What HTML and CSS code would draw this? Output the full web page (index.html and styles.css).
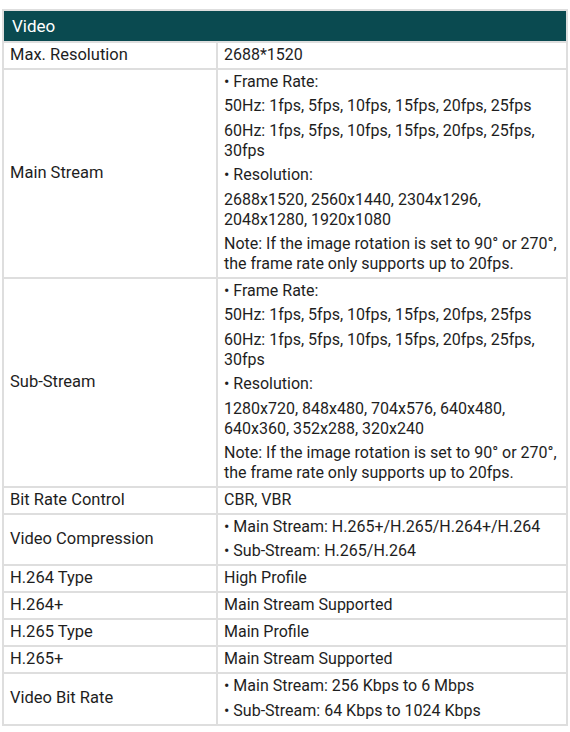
FILE: index.html
```html
<!DOCTYPE html>
<html>
<head>
<meta charset="utf-8">
<link rel="stylesheet" href="styles.css">
</head>
<body>
<table class="spec">
  <colgroup><col class="c1"><col class="c2"></colgroup>
  <thead>
    <tr><th colspan="2" class="head">Video</th></tr>
  </thead>
  <tbody>
    <tr><td class="lbl">Max. Resolution</td><td class="val"><p>2688*1520</p></td></tr>
    <tr><td class="lbl">Main Stream</td><td class="val">
      <p>• Frame Rate:</p>
      <p>50Hz: 1fps, 5fps, 10fps, 15fps, 20fps, 25fps</p>
      <p>60Hz: 1fps, 5fps, 10fps, 15fps, 20fps, 25fps, 30fps</p>
      <p>• Resolution:</p>
      <p>2688x1520, 2560x1440, 2304x1296, 2048x1280, 1920x1080</p>
      <p>Note: If the image rotation is set to 90° or 270°, the frame rate only supports up to 20fps.</p>
    </td></tr>
    <tr><td class="lbl">Sub-Stream</td><td class="val">
      <p>• Frame Rate:</p>
      <p>50Hz: 1fps, 5fps, 10fps, 15fps, 20fps, 25fps</p>
      <p>60Hz: 1fps, 5fps, 10fps, 15fps, 20fps, 25fps, 30fps</p>
      <p>• Resolution:</p>
      <p>1280x720, 848x480, 704x576, 640x480, 640x360, 352x288, 320x240</p>
      <p>Note: If the image rotation is set to 90° or 270°, the frame rate only supports up to 20fps.</p>
    </td></tr>
    <tr><td class="lbl">Bit Rate Control</td><td class="val"><p>CBR, VBR</p></td></tr>
    <tr><td class="lbl">Video Compression</td><td class="val">
      <p>• Main Stream: H.265+/H.265/H.264+/H.264</p>
      <p>• Sub-Stream: H.265/H.264</p>
    </td></tr>
    <tr><td class="lbl">H.264 Type</td><td class="val"><p>High Profile</p></td></tr>
    <tr><td class="lbl">H.264+</td><td class="val"><p>Main Stream Supported</p></td></tr>
    <tr><td class="lbl">H.265 Type</td><td class="val"><p>Main Profile</p></td></tr>
    <tr><td class="lbl">H.265+</td><td class="val"><p>Main Stream Supported</p></td></tr>
    <tr><td class="lbl">Video Bit Rate</td><td class="val">
      <p>• Main Stream: 256 Kbps to 6 Mbps</p>
      <p>• Sub-Stream: 64 Kbps to 1024 Kbps</p>
    </td></tr>
  </tbody>
</table>
</body>
</html>
```
FILE: styles.css
```css
html, body {
  margin: 0;
  padding: 0;
  background: #ffffff;
}
body {
  padding: 9px 2px 0 2px;
  font-family: Roboto, "Liberation Sans", sans-serif;
  color: #1e1e1e;
}
.spec {
  width: 566px;
  border-collapse: collapse;
  table-layout: fixed;
  font-size: 16px;
  line-height: 20px;
}
.c1 { width: 214px; }
.spec th, .spec td {
  border: 2px solid #dedede;
}
.head {
  background: #0a4a50;
  color: #ffffff;
  text-align: left;
  font-weight: normal;
  font-size: 17px;
  height: 30px;
  padding: 0 8px;
  border-color: #0a4a50;
}
.lbl {
  padding: 2px 5px 3px 6px;
  vertical-align: middle;
  font-size: 16.5px;
}
.val {
  padding: 2px 4px 3px 6px;
  vertical-align: middle;
}
.val p {
  margin: 0;
}
.val p + p {
  margin-top: 4.4px;
}
```
